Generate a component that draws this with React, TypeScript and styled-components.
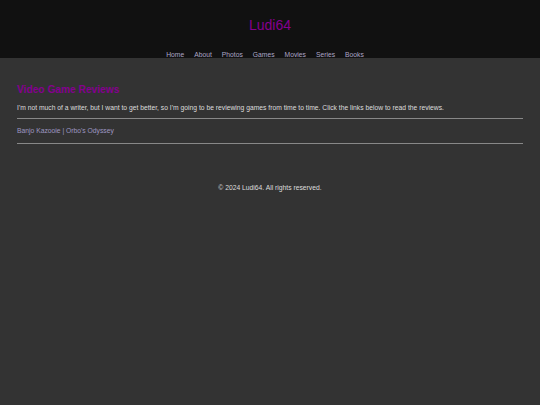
import React from "react";
import styled, { createGlobalStyle } from "styled-components";

const GlobalStyle = createGlobalStyle`
    html, body {
        margin: 0;
        padding: 0;
        background: #333333;
        font-family: "Liberation Sans", Arial, sans-serif;
        color: #dddddd;
    }
`

const Header = styled.header`
    background: #111111;
    display: flex;
    flex-direction: column;
    align-items: center;
    height: 58px;
`

const Title = styled.h1`
    margin: 16px 0 0 0;
    font-size: 14px;
    font-weight: normal;
    color: #85008f;
    line-height: 18px;
`

const Nav = styled.nav`
    display: flex;
    flex-direction: row;
    margin-top: 16px;
`

const NavLink = styled.a`
    font-size: 6.75px;
    line-height: 9px;
    margin-right: 10px;
    color: #aca6c6;
    text-decoration: none;
`

const Main = styled.main`
    padding: 25px 17px 0 17px;
`

const Heading = styled.h2`
    margin: 0;
    font-size: 10.2px;
    font-weight: bold;
    line-height: 14px;
    color: #85008f;
`

const Text = styled.p`
    margin: 6px 0 0 0;
    font-size: 6.75px;
    line-height: 9px;
`

const Rule = styled.hr`
    border: none;
    border-top: 1px solid #888888;
    margin: ${(p: { $top: number }) => p.$top}px 0 0 0;
`

const Links = styled.div`
    margin-top: 7px;
    font-size: 6.75px;
    line-height: 9px;
    color: #9e97c2;
`

const ReviewLink = styled.a`
    color: #9e97c2;
    text-decoration: none;
`

const Footer = styled.footer`
    text-align: center;
    font-size: 6.75px;
    line-height: 9px;
    margin-top: 39px;
`

const navItems = ["Home", "About", "Photos", "Games", "Movies", "Series", "Books"];

const App = () => {
    return (
        <>
            <GlobalStyle />
            <Header>
                <Title>Ludi64</Title>
                <Nav>
                    {navItems.map(item => (
                        <NavLink key={item} href="#">{item}</NavLink>
                    ))}
                </Nav>
            </Header>
            <Main>
                <Heading>Video Game Reviews</Heading>
                <Text>
                    I'm not much of a writer, but I want to get better, so I'm going to be reviewing games from time to time. Click the links below to read the reviews.
                </Text>
                <Rule $top={6} />
                <Links>
                    <ReviewLink href="#">Banjo Kazooie</ReviewLink> | <ReviewLink href="#">Orbo's Odyssey</ReviewLink>
                </Links>
                <Rule $top={8} />
            </Main>
            <Footer>&copy; 2024 Ludi64. All rights reserved.</Footer>
        </>
    )
};

export default App;
